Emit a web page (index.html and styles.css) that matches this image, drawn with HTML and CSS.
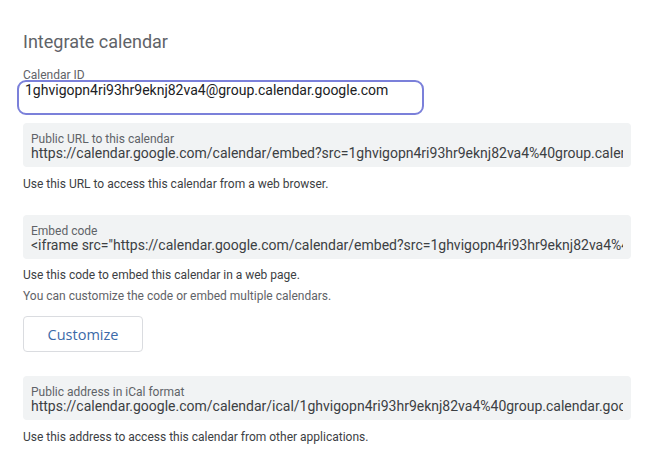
FILE: index.html
```html
<!DOCTYPE html>
<html>
<head>
<meta charset="utf-8">
<link rel="stylesheet" href="styles.css">
</head>
<body>
<div class="page">
  <h1 class="title">Integrate calendar</h1>
  <div class="field-id">
    <div class="label">Calendar ID</div>
    <div class="id-box">1ghvigopn4ri93hr9eknj82va4@group.calendar.google.com</div>
  </div>
  <div class="box box-url">
    <div class="label">Public URL to this calendar</div>
    <div class="value">https://calendar.google.com/calendar/embed?src=1ghvigopn4ri93hr9eknj82va4%40group.calendar.google.com&amp;ctz=America%2FNew_York</div>
  </div>
  <p class="help help-1">Use this URL to access this calendar from a web browser.</p>
  <div class="box box-embed">
    <div class="label">Embed code</div>
    <div class="value">&lt;iframe src="https://calendar.google.com/calendar/embed?src=1ghvigopn4ri93hr9eknj82va4%40group.calendar.google.com&amp;ctz=America%2FNew_York" style="border: 0" width="800" height="600" frameborder="0" scrolling="no"&gt;&lt;/iframe&gt;</div>
  </div>
  <p class="help help-2">Use this code to embed this calendar in a web page.</p>
  <p class="help help-light">You can customize the code or embed multiple calendars.</p>
  <button class="btn">Customize</button>
  <div class="box box-ical">
    <div class="label">Public address in iCal format</div>
    <div class="value">https://calendar.google.com/calendar/ical/1ghvigopn4ri93hr9eknj82va4%40group.calendar.google.com/public/basic.ics</div>
  </div>
  <p class="help help-1">Use this address to access this calendar from other applications.</p>
</div>
</body>
</html>
```
FILE: styles.css
```css
html, body {
  margin: 0;
  padding: 0;
  background: #ffffff;
}
.page {
  padding: 30px 15px 0 23px;
  font-family: Roboto, "Liberation Sans", sans-serif;
  color: #3c4043;
}
.title {
  margin: 0;
  font-family: Roboto, "Liberation Sans", sans-serif;
  font-weight: 400;
  font-size: 18px;
  line-height: 24px;
  color: #5f6368;
}
.field-id {
  margin-top: 14px;
}
.label {
  font-size: 12px;
  line-height: 14px;
  color: #5f6368;
}
.id-box {
  box-sizing: border-box;
  margin-top: -2px;
  margin-left: -6px;
  width: 407px;
  height: 35px;
  border: 2px solid #7b80da;
  border-radius: 9px;
  padding: 0 0 0 6px;
  font-size: 14px;
  line-height: 16px;
  color: #202124;
}
.box {
  box-sizing: border-box;
  background: #f1f3f4;
  border-radius: 4px;
  padding: 9px 8px 0 8px;
  height: 44px;
  overflow: hidden;
}
.box .value {
  font-size: 14px;
  line-height: 18px;
  color: #3c4043;
  white-space: nowrap;
  overflow: hidden;
  margin-top: -2px;
}
.box-url {
  margin-top: 8px;
}
.box-embed {
  margin-top: 23px;
}
.box-ical {
  margin-top: 24px;
}
.help {
  margin: 0;
  font-size: 12px;
  line-height: 16px;
  color: #3c4043;
}
.help-1 {
  margin-top: 9px;
}
.help-2 {
  margin-top: 8px;
}
.help-light {
  margin-top: 5px;
  color: #5f6368;
}
.btn {
  display: block;
  box-sizing: border-box;
  margin-top: 12px;
  width: 120px;
  height: 36px;
  background: #fff;
  border: 1px solid #dadce0;
  border-radius: 4px;
  font-family: "Open Sans", Roboto, sans-serif;
  font-size: 14.5px;
  font-weight: 500;
  color: #3b6aa8;
  padding: 0;
}
```
